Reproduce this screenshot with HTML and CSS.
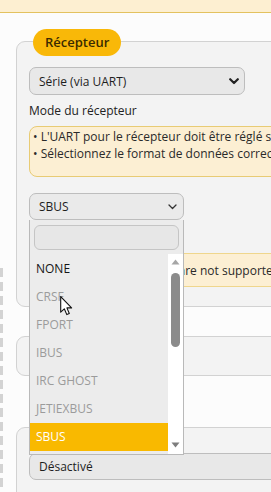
FILE: index.html
```html
<!DOCTYPE html>
<html lang="fr">
<head>
<meta charset="utf-8">
<link rel="stylesheet" href="styles.css">
</head>
<body>
<div class="topbar"></div>
<main class="page">
  <section class="panel p1">
    <div class="legend">Récepteur</div>
    <div class="select wide">
      <span>Série (via UART)</span>
      <svg class="chev-bold" width="10" height="7" viewBox="0 0 10 7"><polyline points="1.2,1.2 5,5 8.8,1.2" fill="none" stroke="#222" stroke-width="2.2" stroke-linecap="round" stroke-linejoin="round"/></svg>
    </div>
    <div class="label">Mode du récepteur</div>
    <div class="note">
      <p>• L'UART pour le récepteur doit être réglé sur « Serial RX » (dans l'onglet Ports)</p>
      <p>• Sélectionnez le format de données correct dans la liste déroulante ci-dessous</p>
    </div>
    <div class="combo">
      <div class="select narrow">
        <span>SBUS</span>
        <svg class="chev-thin" width="9" height="6" viewBox="0 0 9 6"><polyline points="1,1 4.5,4.5 8,1" fill="none" stroke="#333" stroke-width="1.3" stroke-linecap="round" stroke-linejoin="round"/></svg>
      </div>
      <div class="dropdown">
        <div class="search"></div>
        <div class="listwrap">
          <ul class="options">
            <li class="opt">NONE</li>
            <li class="opt dis">CRSF</li>
            <li class="opt dis">FPORT</li>
            <li class="opt dis">IBUS</li>
            <li class="opt dis">IRC GHOST</li>
            <li class="opt dis">JETIEXBUS</li>
            <li class="opt sel">SBUS</li>
          </ul>
          <div class="scrollbar">
            <svg class="arrow-up" width="9" height="6" viewBox="0 0 9 6"><polygon points="0.5,5.5 4.5,0.5 8.5,5.5" fill="#a6a6a6"/></svg>
            <div class="thumb"></div>
            <svg class="arrow-down" width="9" height="6" viewBox="0 0 9 6"><polygon points="0.5,0.5 8.5,0.5 4.5,5.5" fill="#7d7d7d"/></svg>
          </div>
        </div>
        <svg class="cursor" width="13" height="20" viewBox="0 0 13 20"><path d="M0.7,0.7 L0.7,16.2 L4.3,12.8 L6.8,18.6 L9.3,17.5 L6.9,11.9 L11.6,11.9 Z" fill="#fff" stroke="#111" stroke-width="1.1" stroke-linejoin="round"/></svg>
      </div>
    </div>
    <div class="note note2">
      <p>• Some receiver functions are not supported in this mode</p>
    </div>
  </section>
  <section class="panel p2"></section>
  <section class="panel p3">
    <div class="select full"><span>Désactivé</span></div>
  </section>
</main>
</body>
</html>
```

FILE: styles.css
```css
html, body {
  margin: 0;
  padding: 0;
  overflow: hidden;
}
body {
  width: 271px;
  height: 492px;
  background-color: #fcfcfc;
  background-image: repeating-linear-gradient(to bottom, #d3d3d3 0 9px, transparent 9px 14px);
  background-repeat: no-repeat;
  background-size: 3px 230px;
  background-position: 0 268px;
  font-family: "Open Sans", "Noto Sans", sans-serif;
  font-size: 12px;
  color: #222;
}
.topbar {
  height: 12px;
  background: #fdefd1;
  border-bottom: 1px solid #e3c25f;
}
.page {
  padding: 28px 0 0 16px;
  width: 400px;
}
.panel {
  box-sizing: border-box;
  width: 330px;
  border: 1px solid #d2d2d2;
  border-radius: 9px;
  background: #f3f3f3;
  display: flex;
  flex-direction: column;
  align-items: flex-start;
  padding: 0 12px;
}
.p1 {
  padding-bottom: 19px;
}
.legend {
  margin-top: -13px;
  margin-left: 4px;
  height: 27px;
  line-height: 27px;
  padding: 0 12px;
  border-radius: 14px;
  background: #f9b808;
  color: #3b2b00;
  font-size: 13px;
  font-weight: 600;
}
.select {
  box-sizing: border-box;
  display: flex;
  align-items: center;
  justify-content: space-between;
  background: #e8e8e8;
  border: 1px solid #bdbdbd;
  border-radius: 7px;
  color: #1e1e1e;
}
.wide {
  margin-top: 11px;
  width: 216px;
  height: 28px;
  padding: 0 5px 0 9px;
}
.chev-bold {
  display: block;
}
.label {
  margin-top: 8px;
  line-height: 16px;
  color: #222;
}
.note {
  box-sizing: border-box;
  margin-top: 7px;
  width: 400px;
  border: 1px solid #e8cb74;
  border-radius: 8px;
  background: #fcefd3;
  padding: 1px 0 14px 3px;
  white-space: nowrap;
  line-height: 17px;
  color: #2a2a2a;
}
.note p {
  margin: 0;
}
.combo {
  position: relative;
  z-index: 2;
  margin-top: 16px;
}
.narrow {
  width: 155px;
  height: 27px;
  padding: 0 6px 0 9px;
  background: #eaeaea;
}
.chev-thin {
  display: block;
}
.dropdown {
  position: absolute;
  top: 27px;
  left: 0;
  box-sizing: border-box;
  width: 155px;
  height: 235px;
  background: #ececec;
  border: 1px solid #b9b9b9;
  border-top: none;
  display: flex;
  flex-direction: column;
}
.search {
  box-sizing: border-box;
  margin: 5px 0 0 4px;
  width: 145px;
  height: 25px;
  border: 1px solid #c5c5c5;
  border-radius: 6px;
  background: #e7e7e7;
}
.listwrap {
  margin-top: 4px;
  display: flex;
  flex: 1;
  min-height: 0;
}
.options {
  list-style: none;
  margin: 0;
  padding: 1px 0 0 0;
  flex: 1;
  overflow: hidden;
}
.opt {
  height: 28px;
  line-height: 28px;
  padding-left: 6px;
  color: #151515;
}
.opt.dis {
  color: #9b9b9b;
}
.opt.sel {
  background: #f9b900;
  color: #ffffff;
}
.scrollbar {
  width: 15px;
  background: #ffffff;
  display: flex;
  flex-direction: column;
  align-items: center;
}
.arrow-up {
  margin-top: 5px;
  display: block;
}
.thumb {
  margin-top: 8px;
  width: 9px;
  height: 74px;
  border-radius: 5px;
  background: #8b8b8b;
}
.arrow-down {
  margin-top: auto;
  margin-bottom: 6px;
  display: block;
}
.cursor {
  position: absolute;
  left: 30px;
  top: 76px;
}
.note2 {
  margin-top: 33px;
  padding: 8px 0 7px 3px;
  border-color: #efd68c;
}
.p2 {
  margin-top: 29px;
  height: 40px;
}
.p3 {
  margin-top: 51px;
  padding-top: 25px;
  height: 120px;
}
.full {
  width: 300px;
  height: 27px;
  padding: 0 9px;
}
```
